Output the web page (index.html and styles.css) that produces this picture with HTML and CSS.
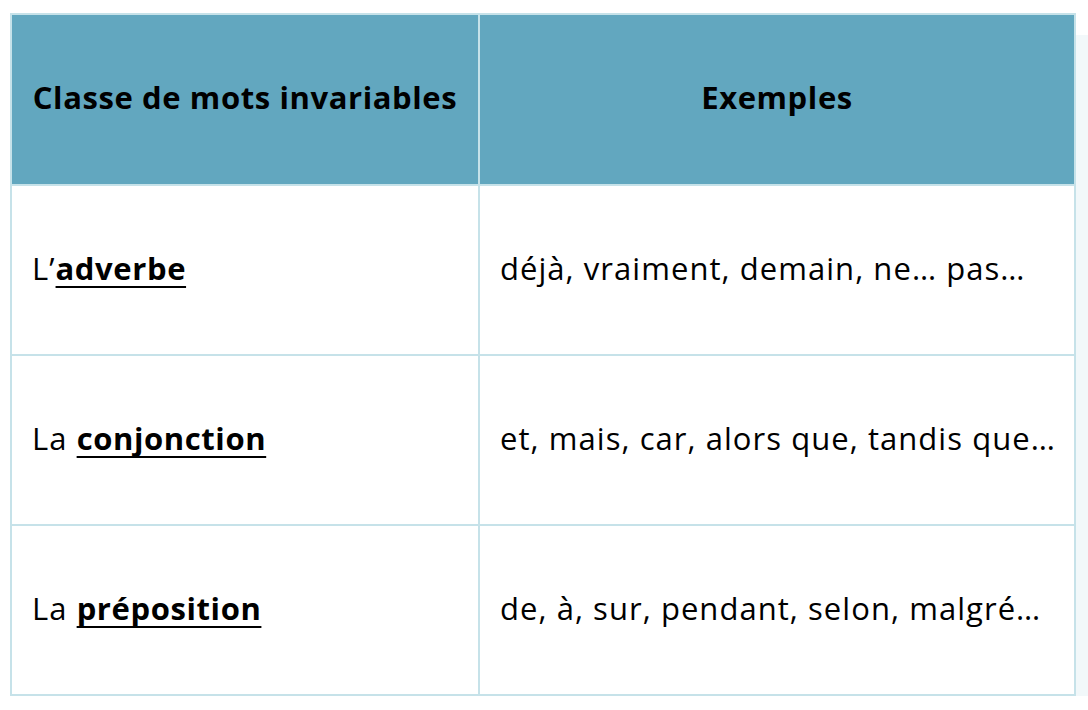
FILE: index.html
```html
<!DOCTYPE html>
<html lang="fr">
<head>
<meta charset="utf-8">
<link rel="stylesheet" href="styles.css">
</head>
<body>
<div class="wrap">
  <table class="tbl">
    <thead>
      <tr>
        <th class="c1">Classe de mots invariables</th>
        <th class="c2">Exemples</th>
      </tr>
    </thead>
    <tbody>
      <tr>
        <td>L’<a href="#">adverbe</a></td>
        <td>déjà, vraiment, demain, ne… pas…</td>
      </tr>
      <tr>
        <td>La <a href="#">conjonction</a></td>
        <td>et, mais, car, alors que, tandis que…</td>
      </tr>
      <tr>
        <td>La <a href="#">préposition</a></td>
        <td>de, à, sur, pendant, selon, malgré…</td>
      </tr>
    </tbody>
  </table>
</div>
</body>
</html>
```

FILE: styles.css
```css
html, body {
  margin: 0;
  padding: 0;
  background: #ffffff;
  overflow: hidden;
}
body {
  font-family: "Open Sans", "Noto Sans", sans-serif;
  color: #000000;
}
.wrap {
  padding: 13px 0 0 10px;
}
.tbl {
  width: 1066px;
  border-collapse: collapse;
  border: 2px solid #c6e2e9;
  box-shadow: 22px 22px 0 #f2f8fa;
  background: #ffffff;
  table-layout: fixed;
}
.tbl th,
.tbl td {
  border: 2px solid #c6e2e9;
  padding: 0 20px;
  box-sizing: border-box;
  font-size: 31px;
  line-height: 1.2;
  white-space: nowrap;
}
.tbl th {
  background: #62a7bf;
  font-weight: 700;
  text-align: center;
  letter-spacing: 0.6px;
  height: 171px;
  padding-bottom: 4px;
}
.tbl th.c1 {
  width: 468px;
}
.tbl td {
  font-weight: 400;
  text-align: left;
  letter-spacing: 1.05px;
  height: 170px;
  padding-bottom: 3px;
}
.tbl td a {
  color: #000000;
  font-weight: 700;
  letter-spacing: 0.6px;
  text-decoration: underline;
  text-decoration-thickness: 2px;
  text-underline-offset: 6px;
  text-decoration-skip-ink: none;
}
```
